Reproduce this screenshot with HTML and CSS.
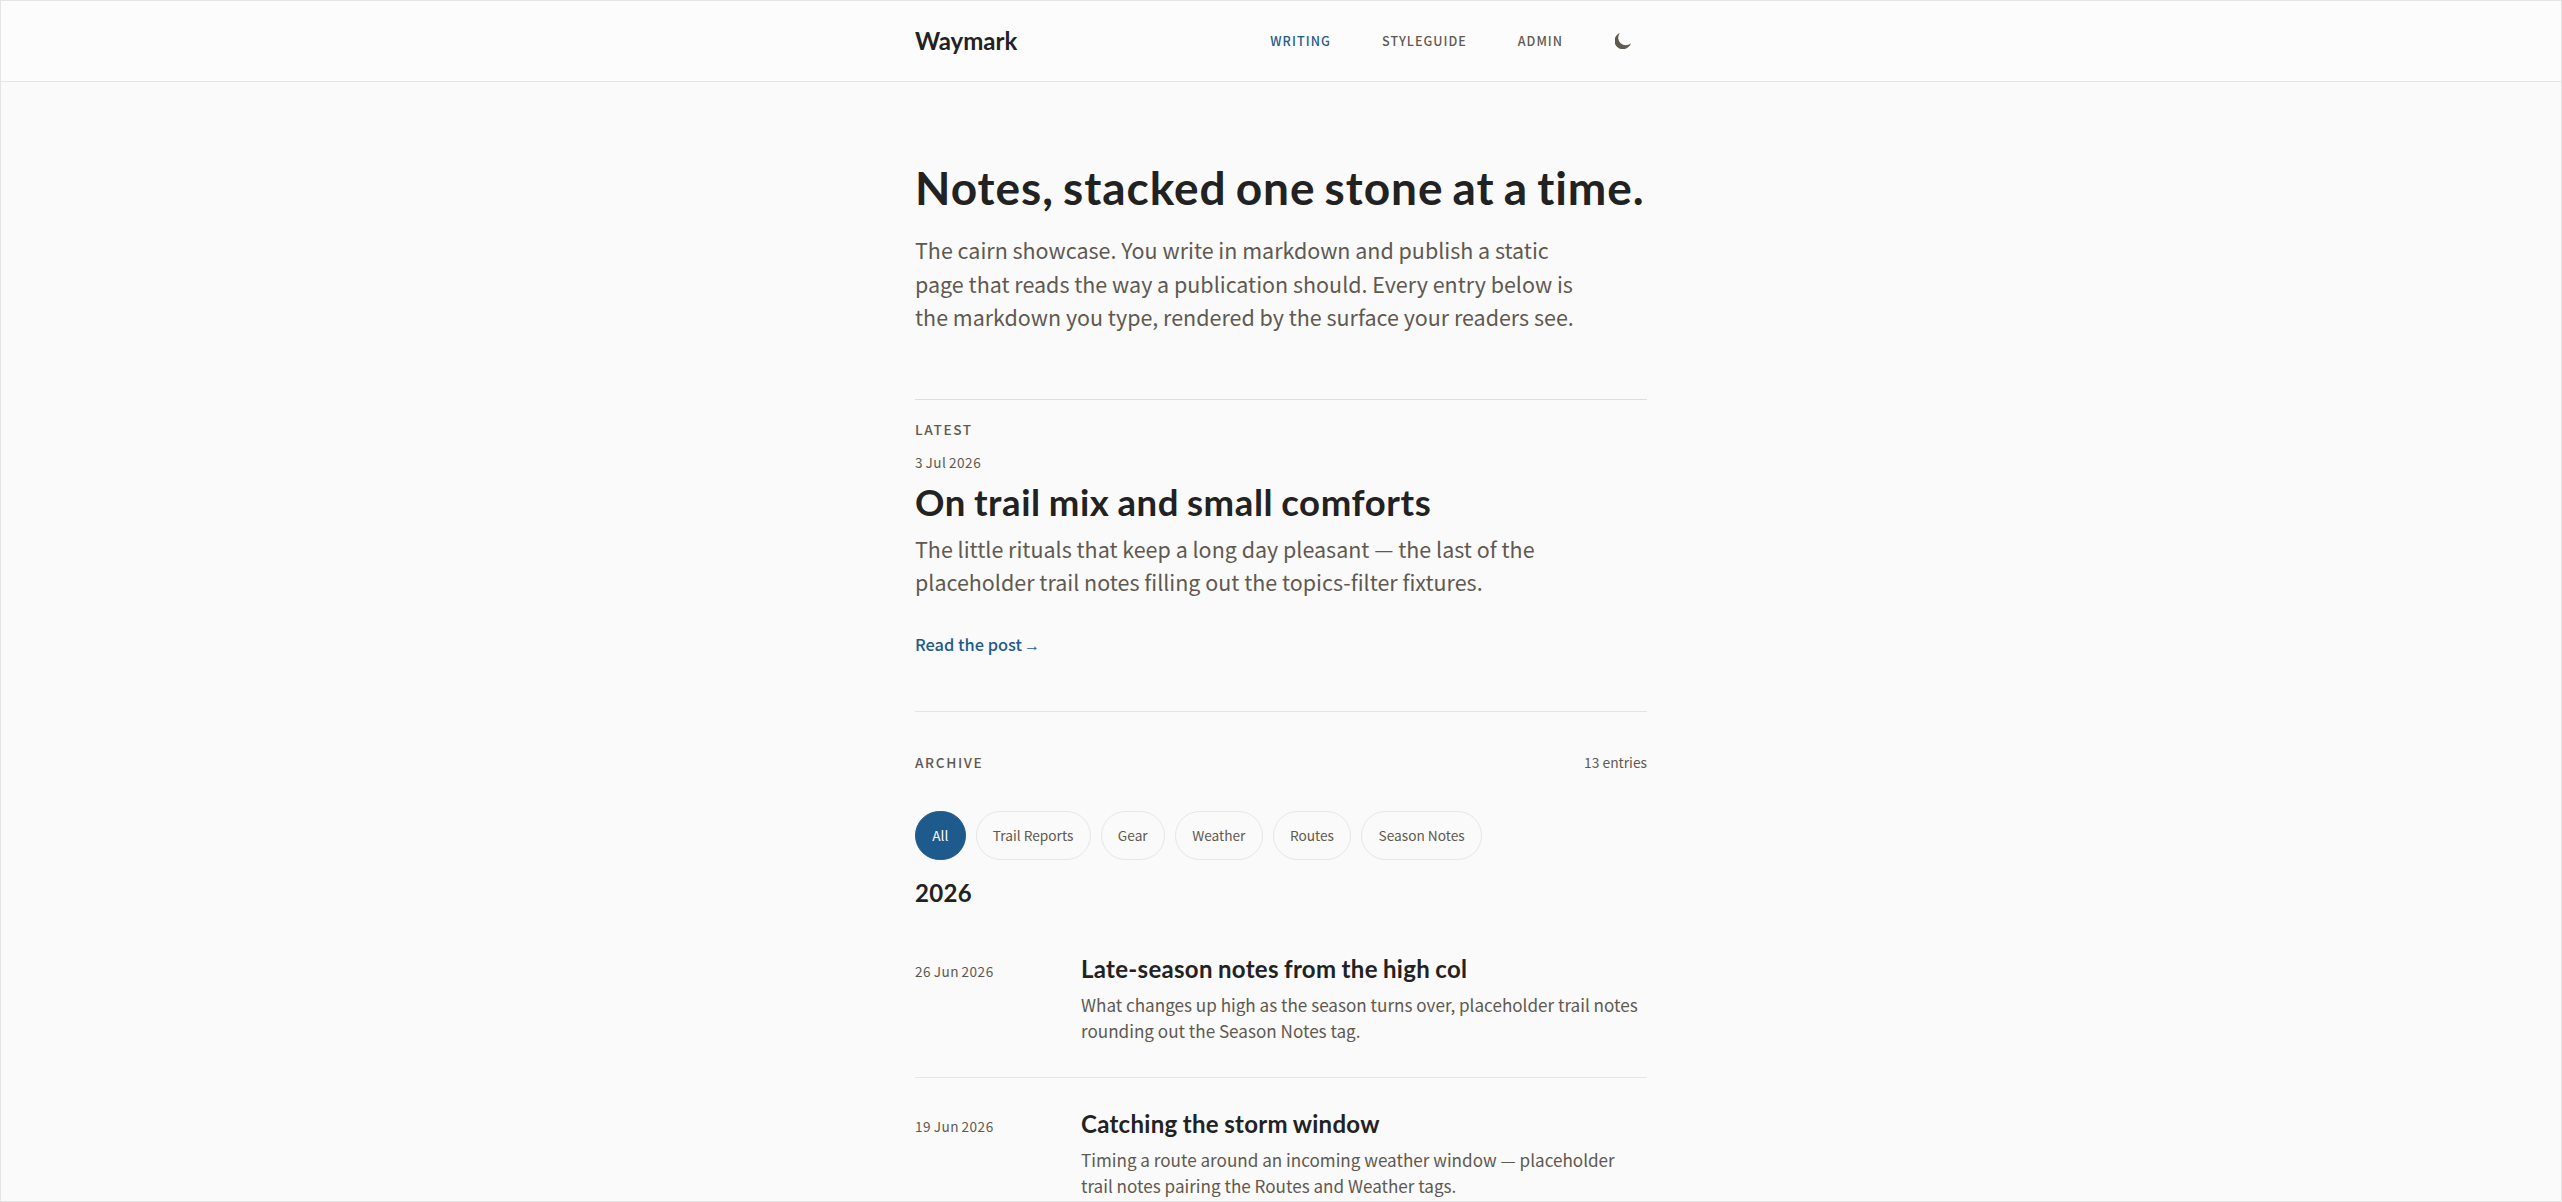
FILE: index.html
```html
<!DOCTYPE html>
<html lang="en">
  <head>
    <meta charset="UTF-8" />
    <meta name="viewport" content="width=device-width, initial-scale=1.0" />
    <title>Waymark</title>
    <link rel="stylesheet" href="styles.css">
  </head>
  <body>
    <header class="site-header">
      <div class="wrap header-row">
        <a class="brand" href="#">Waymark</a>
        <nav class="site-nav">
          <a class="active" href="#">Writing</a>
          <a href="#">Styleguide</a>
          <a href="#">Admin</a>
          <button class="theme-toggle" type="button" aria-label="Toggle theme">
            <svg viewBox="0 0 16 16" width="16" height="16"><path d="M4.8 0A8.4 8.4 0 1 0 15.9 10.3A7.6 7.6 0 0 1 4.8 0Z" fill="currentColor" /></svg>
          </button>
        </nav>
      </div>
    </header>
    <main class="wrap">
      <section class="hero">
        <h1>Notes, stacked one stone at a time.</h1>
        <p class="lead">The cairn showcase. You write in markdown and publish a static page that reads the way a publication should. Every entry below is the markdown you type, rendered by the surface your readers see.</p>
      </section>
      <section class="latest">
        <p class="label">Latest</p>
        <time class="date">3 Jul 2026</time>
        <h2>On trail mix and small comforts</h2>
        <p class="lead">The little rituals that keep a long day pleasant — the last of the placeholder trail notes filling out the topics-filter fixtures.</p>
        <a class="read-more" href="#">Read the post<span class="arrow">→</span></a>
      </section>
      <section class="archive">
        <div class="archive-head">
          <p class="label">Archive</p>
          <span class="count">13 entries</span>
        </div>
        <div class="chips">
          <a class="chip on" href="#">All</a>
          <a class="chip" href="#">Trail Reports</a>
          <a class="chip" href="#">Gear</a>
          <a class="chip" href="#">Weather</a>
          <a class="chip" href="#">Routes</a>
          <a class="chip" href="#">Season Notes</a>
        </div>
        <h3 class="year">2026</h3>
        <ul class="entries">
          <li>
            <time class="date">26 Jun 2026</time>
            <div>
              <h4>Late-season notes from the high col</h4>
              <p>What changes up high as the season turns over, placeholder trail notes rounding out the Season Notes tag.</p>
            </div>
          </li>
          <li>
            <time class="date">19 Jun 2026</time>
            <div>
              <h4>Catching the storm window</h4>
              <p>Timing a route around an incoming weather window — placeholder trail notes pairing the Routes and Weather tags.</p>
            </div>
          </li>
        </ul>
      </section>
    </main>
  </body>
</html>
```

FILE: styles.css
```css
* {
  margin: 0;
  padding: 0;
  box-sizing: border-box;
}
body {
  height: 1202px;
  overflow: hidden;
  border: 1px solid #e4e4e4;
  background: #fafafa;
  color: #5f5950;
  font-family: "Noto Sans CJK SC", "Open Sans", sans-serif;
  font-size: 17.1px;
}
a {
  color: inherit;
  text-decoration: none;
}
h1,
h2,
h3,
h4,
.brand {
  font-family: "Lato", "Inter", sans-serif;
  font-weight: 700;
  font-variant-ligatures: none;
  color: #222;
}
.wrap {
  width: 732px;
  margin: 0 auto;
}
.site-header {
  height: 81px;
  border-bottom: 1px solid #e6e6e6;
  background: #fcfcfc;
}
.header-row {
  display: flex;
  align-items: center;
  justify-content: space-between;
  height: 80px;
}
.brand {
  font-size: 24px;
  line-height: 30px;
}
.site-nav {
  display: flex;
  align-items: center;
  font-size: 12.6px;
  font-weight: 500;
  line-height: 20px;
  letter-spacing: 1px;
  text-transform: uppercase;
}
.site-nav a {
  margin-right: 51px;
}
.site-nav .active {
  color: #1f5a8c;
  letter-spacing: 1.1px;
}
.theme-toggle {
  display: flex;
  margin-left: 1px;
  margin-right: 16px;
  border: 0;
  background: none;
  color: #5f5950;
}
.hero {
  padding-top: 78px;
}
h1 {
  font-size: 46px;
  line-height: 56px;
  letter-spacing: 0.95px;
  word-spacing: -3px;
  white-space: nowrap;
}
.lead {
  max-width: 670px;
  font-size: 21.48px;
  line-height: 33.6px;
}
.hero .lead {
  margin-top: 17px;
}
.latest {
  height: 313px;
  margin-top: 65.2px;
  padding-top: 19px;
  border-top: 1px solid #dedede;
  border-bottom: 1px solid #e4e4e4;
}
.label {
  font-size: 13.7px;
  font-weight: 500;
  line-height: 20px;
  letter-spacing: 1.6px;
  text-transform: uppercase;
}
.date {
  display: block;
  font-size: 13.6px;
  line-height: 20px;
  letter-spacing: 0.5px;
  word-spacing: -1px;
}
.latest .date {
  margin-top: 13px;
}
h2 {
  margin-top: 8px;
  font-size: 36.5px;
  line-height: 44px;
  letter-spacing: 0.6px;
  word-spacing: -1.5px;
}
.latest .lead {
  margin-top: 8px;
  line-height: 33px;
}
.read-more {
  display: block;
  margin-top: 34px;
  color: #1f5a8c;
  font-size: 16.4px;
  font-weight: 500;
  line-height: 24px;
}
.arrow {
  margin-left: 2px;
  font-family: "Liberation Sans", sans-serif;
  font-size: 16px;
  line-height: 1;
}
.archive {
  padding-top: 40px;
}
.archive-head {
  display: flex;
  justify-content: space-between;
  line-height: 20px;
}
.count {
  font-size: 13.8px;
}
.chips {
  display: flex;
  gap: 10px;
  margin-top: 39px;
}
.chip {
  height: 49px;
  padding: 0 16.25px;
  border: 1px solid #e6e6e6;
  border-radius: 25px;
  font-size: 13.7px;
  line-height: 47px;
}
.chip.on {
  border-color: #1f5a8c;
  background: #1f5a8c;
  color: #fafafa;
}
.year {
  margin-top: 18px;
  font-size: 24px;
  line-height: 30px;
  letter-spacing: 0.3px;
}
.entries {
  margin-top: 15px;
  list-style: none;
}
.entries li {
  display: grid;
  grid-template-columns: 166px 1fr;
  height: 155px;
  padding-top: 31px;
  border-bottom: 1px solid #e6e6e6;
}
.entries .date {
  margin-top: 7px;
}
h4 {
  font-size: 24px;
  line-height: 30px;
  letter-spacing: 0.3px;
  word-spacing: -0.9px;
}
.entries p {
  margin-top: 8px;
  line-height: 26px;
}
```
